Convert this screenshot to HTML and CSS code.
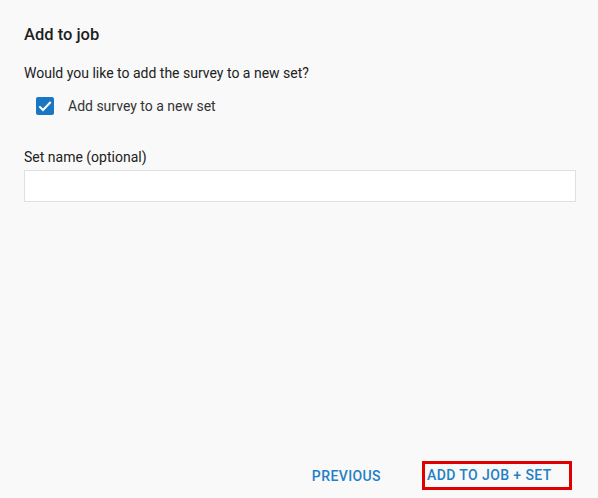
FILE: index.html
```html
<html>
  <head>
    <title>Add to job</title>
    <link rel="stylesheet" href="styles.css">
  </head>
  <body>
    <div class="dialog">
      <div class="content">
        <h1 class="title">Add to job</h1>
        <p class="question">Would you like to add the survey to a new set?</p>

        <label class="check-row">
          <span class="checkbox">
            <svg width="16" height="16" viewBox="0 0 24 24">
              <path d="M3.5 12.5l5.5 5.5L20.5 6" fill="none" stroke="#ffffff" stroke-width="3"/>
            </svg>
          </span>
          <span class="check-label">Add survey to a new set</span>
        </label>

        <label class="field-label" for="setName">Set name (optional)</label>
        <input type="text" id="setName" class="field-input">
      </div>

      <!-- Dialog actions -->
      <div class="actions">
        <button class="btn btn-prev">PREVIOUS</button>
        <button class="btn btn-next">ADD TO JOB + SET</button>
      </div>
    </div>
  </body>
</html>
```

FILE: styles.css
```css
body {
  margin: 0;
  background-color: #f9f9f9;
  color: #212121;
  font-family: Roboto, "Liberation Sans", sans-serif;
}
.dialog {
  display: flex;
  flex-direction: column;
  height: 100vh;
}
.content {
  flex: 1;
  display: flex;
  flex-direction: column;
  padding: 23px 22px 0 24px;
}
.title {
  margin: 0;
  font-size: 16.5px;
  line-height: 24px;
  font-weight: 500;
  color: #1e1e1e;
}
.question {
  margin: 16px 0 0 0;
  font-size: 14px;
  line-height: 20px;
}
.check-row {
  display: flex;
  align-items: center;
  height: 24px;
  margin-top: 11px;
  padding-left: 12px;
  font-size: 14px;
  color: #333333;
}
.checkbox {
  display: flex;
  align-items: center;
  justify-content: center;
  width: 18px;
  height: 18px;
  border-radius: 2px;
  background-color: #1a76c2;
  margin-right: 14px;
}
.field-label {
  margin-top: 29px;
  font-size: 14px;
  line-height: 20px;
}
.field-input {
  margin-top: 3px;
  height: 32px;
  box-sizing: border-box;
  border: 1px solid #e0e0e0;
  background-color: #ffffff;
  outline: none;
}
.actions {
  display: flex;
  justify-content: flex-end;
  align-items: center;
  padding: 0 26px 8px 0;
}
.btn {
  background: none;
  border: none;
  font-family: Roboto, "Liberation Sans", sans-serif;
  font-size: 14px;
  font-weight: 500;
  letter-spacing: 0.4px;
  color: #1f80c6;
  cursor: pointer;
}
.btn-prev {
  padding: 0 8px;
  margin-right: 33px;
}
.btn-next {
  box-sizing: border-box;
  width: 150px;
  height: 29px;
  padding: 0 0 1px 2px;
  text-align: left;
  border: 3px solid #e10000;
}
```
